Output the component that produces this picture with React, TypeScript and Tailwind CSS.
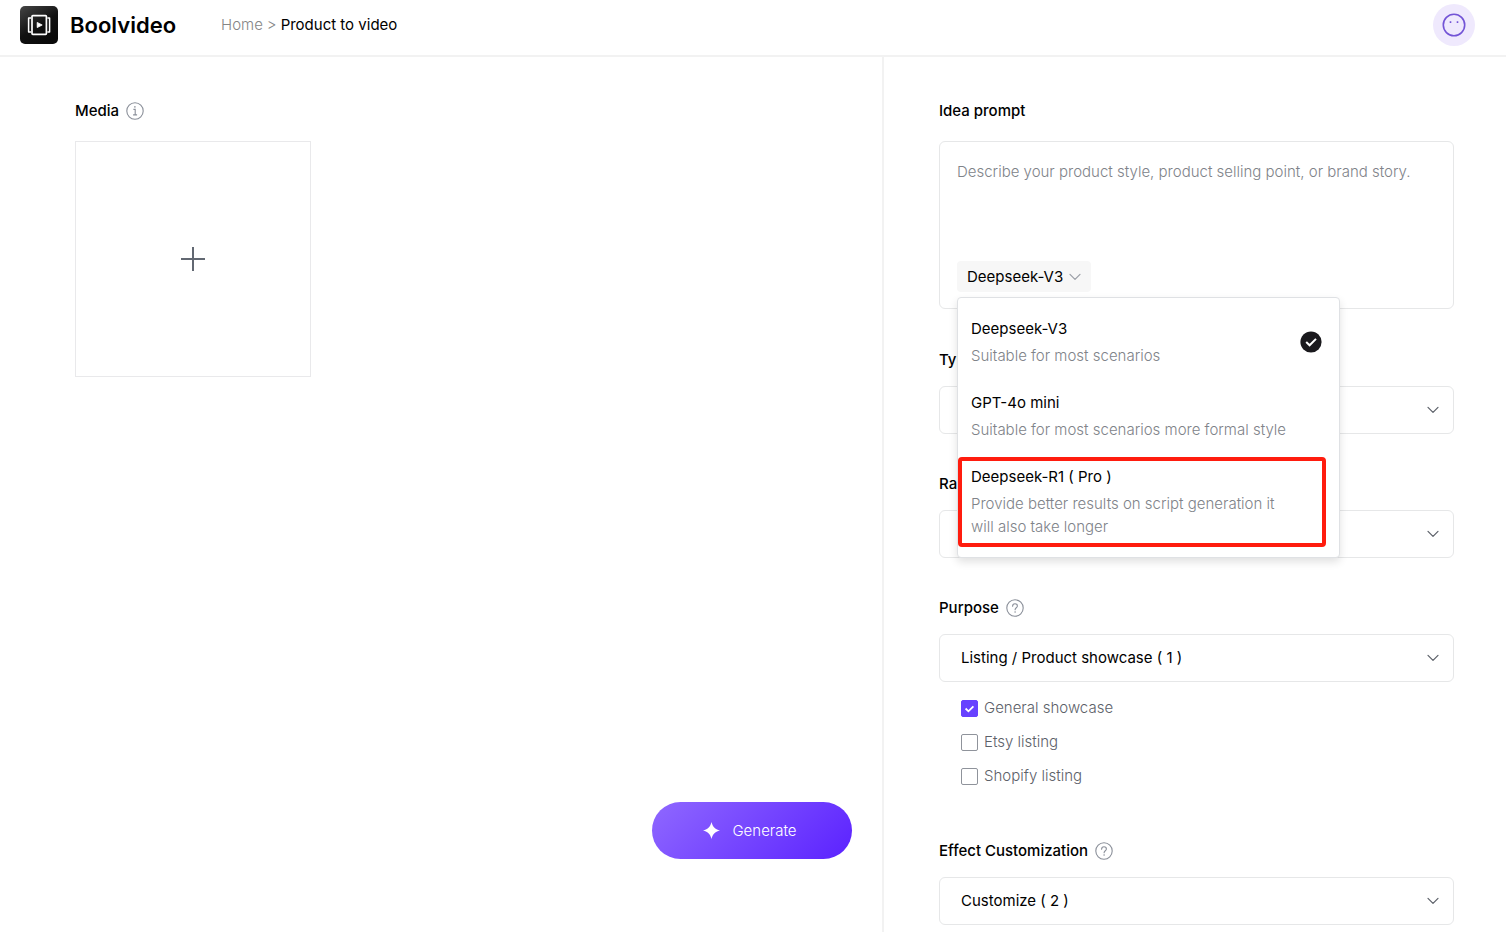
import { ReactNode, useState } from 'react';
import clsx from 'clsx';

interface IModel {
  id: string;
  name: string;
  description: string;
  highlighted?: boolean;
}

interface SelectFieldProps {
  id: string;
  label: string;
  options: string[];
  hint?: boolean;
  children?: ReactNode;
}

const models: IModel[] = [
  {
    id: 'deepseek-v3',
    name: 'Deepseek-V3',
    description: 'Suitable for most scenarios',
  },
  {
    id: 'gpt-4o-mini',
    name: 'GPT-4o mini',
    description: 'Suitable for most scenarios more formal style',
  },
  {
    id: 'deepseek-r1',
    name: 'Deepseek-R1 ( Pro )',
    description:
      'Provide better results on script generation it will also take longer',
    highlighted: true,
  },
];

const purposes = ['General showcase', 'Etsy listing', 'Shopify listing'];

const LogoIcon = () => (
  <svg width="38" height="38" viewBox="0 0 38 38" fill="none">
    <defs>
      <linearGradient id="logo" x1="0" y1="0" x2="24" y2="38" gradientUnits="userSpaceOnUse">
        <stop stopColor="#454545" />
        <stop offset="0.6" stopColor="#111111" />
        <stop offset="1" stopColor="#0a0a0a" />
      </linearGradient>
    </defs>
    <rect width="38" height="38" rx="5" fill="url(#logo)" />
    <rect x="12" y="9.7" width="14.4" height="18.6" rx="0.8" stroke="#fff" strokeWidth="1.7" />
    <path
      d="M11 12H8.6v14H11M27.400 12h2.2v14h-2.200"
      stroke="#fff"
      strokeWidth="1.5"
      strokeLinejoin="round"
    />
    <path d="M17.2 16.4v5.2l5-2.6z" fill="#fff" stroke="#fff" strokeWidth="0.8" strokeLinejoin="round" />
  </svg>
);

const FaceIcon = () => (
  <svg width="24" height="24" viewBox="0 0 24 24" fill="none">
    <circle cx="12" cy="12" r="10.7" stroke="#7354d6" strokeWidth="1.6" />
    <path d="M8.5 8.2v1.9M15.5 8.2v1.9" stroke="#7354d6" strokeWidth="1.6" />
  </svg>
);

const InfoIcon = () => (
  <svg width="18" height="18" viewBox="0 0 18 18" fill="none" stroke="#8a8f99">
    <circle cx="9" cy="9" r="8.2" strokeWidth="1.1" />
    <path d="M7.4 7.4h1.8v5.4M7.1 12.9h4" strokeWidth="1.1" />
    <circle cx="8.9" cy="4.9" r="0.8" fill="#8a8f99" stroke="none" />
  </svg>
);

const HelpIcon = () => (
  <svg width="18" height="18" viewBox="0 0 18 18" fill="none" stroke="#8a8f99">
    <circle cx="9" cy="9" r="8.2" strokeWidth="1.1" />
    <path
      d="M6.6 7.2c0-1.5 1-2.4 2.4-2.4s2.4.9 2.4 2.2c0 1.8-2.3 1.8-2.3 3.8"
      strokeWidth="1.1"
      strokeLinecap="round"
    />
    <circle cx="9.1" cy="13" r="0.8" fill="#8a8f99" stroke="none" />
  </svg>
);

const ChevronIcon = ({ className }: { className?: string }) => (
  <svg className={className} width="12" height="8" viewBox="0 0 12 8" fill="none">
    <path d="M1 1.4 6 6.4l5-5" stroke="currentColor" strokeWidth="1.2" strokeLinecap="round" strokeLinejoin="round" />
  </svg>
);

const SelectField = ({ id, label, options, hint, children }: SelectFieldProps) => (
  <div>
    <div className="flex h-[22px] items-center gap-[7px]">
      <label htmlFor={id} className="font-medium">
        {label}
      </label>
      {hint && <HelpIcon />}
    </div>
    <div className="relative mt-[15px]">
      <select
        id={id}
        className="h-12 w-full appearance-none rounded-md border border-[#e6e7e8] bg-white px-[21px] focus:outline-none focus:ring-2 focus:ring-violet-500"
      >
        {options.map(option => (
          <option key={option}>{option}</option>
        ))}
      </select>
      <ChevronIcon className="pointer-events-none absolute top-5 right-[15px] text-[#5b6068]" />
    </div>
    {children}
  </div>
);

const ModelPicker = () => {
  const [isOpen, setIsOpen] = useState(true);
  const [selectedId, setSelectedId] = useState('deepseek-v3');
  const selected = models.find(model => model.id === selectedId);

  return (
    <div className="relative self-start">
      <button
        type="button"
        aria-expanded={isOpen}
        className="flex h-[31px] cursor-pointer items-center gap-[6px] rounded bg-[#f7f7f7] px-[10px]"
        onClick={() => setIsOpen(!isOpen)}
      >
        {selected?.name}
        <ChevronIcon className="text-[#9a9ea6]" />
      </button>

      {isOpen && (
        <div className="absolute top-full left-0 z-20 mt-[5px] flex w-[383px] flex-col gap-[7px] rounded border border-[#dfe1e4] bg-white pt-[11px] pr-[13px] pb-[10px] shadow-[0_4px_8px_rgba(0,0,0,0.12)]">
          {models.map(model => (
            <button
              key={model.id}
              type="button"
              className={clsx(
                'flex cursor-pointer items-center gap-2 rounded border-4 pt-1 pb-[5px] pl-[9px] text-left leading-[23px]',
                model.highlighted ? 'border-[#ff1c0e]' : 'border-transparent'
              )}
              onClick={() => setSelectedId(model.id)}
            >
              <span className="flex-1">
                <span className="block">{model.name}</span>
                <span className="mt-1 block font-light text-[#808389]">
                  {model.description}
                </span>
              </span>
              <span className="w-[22px]">
                {model.id === selectedId && (
                  <svg width="22" height="22" viewBox="0 0 22 22" fill="none">
                    <circle cx="11" cy="11" r="10.6" fill="#1a191d" />
                    <path d="m6.2 11 3.4 3.3 6.4-6.4" stroke="#fff" strokeWidth="2" />
                  </svg>
                )}
              </span>
            </button>
          ))}
        </div>
      )}
    </div>
  );
};

const Header = () => (
  <header className="flex h-[57px] items-center border-b-2 border-[#f2f2f2] pr-[31px] pb-[5px] pl-5">
    <a href="#" className="flex items-center gap-3">
      <LogoIcon />
      <span className="text-[22px] font-semibold">Boolvideo</span>
    </a>
    <nav className="ml-[45px] flex gap-1 text-[#858585]">
      <a href="#" className="font-light">
        Home
      </a>
      <span className="font-light">&gt;</span>
      <span className="text-black">Product to video</span>
    </nav>
    <button
      type="button"
      aria-label="Account"
      className="ml-auto flex size-[42px] cursor-pointer items-center justify-center rounded-full bg-[#efe9fd]"
    >
      <FaceIcon />
    </button>
  </header>
);

const App = () => {
  const [checked, setChecked] = useState<string[]>(['General showcase']);

  const togglePurpose = (purpose: string) => {
    setChecked(
      checked.includes(purpose)
        ? checked.filter(item => item !== purpose)
        : [...checked, purpose]
    );
  };

  return (
    <div className="flex min-h-screen flex-col bg-white font-['Inter',sans-serif] text-[15px] leading-[22px] text-black">
      <Header />
      <main className="flex flex-1">
        <section className="flex flex-1 flex-col justify-between pt-[43px] pr-[30px] pb-[73px] pl-[75px]">
          <div>
            <h2 className="flex items-center gap-[7px] font-medium">
              Media
              <InfoIcon />
            </h2>
            <button
              type="button"
              aria-label="Add media"
              className="mt-[19px] flex size-[236px] cursor-pointer items-center justify-center border border-[#e9e9eb]"
            >
              <svg width="26" height="26" viewBox="0 0 26 26" fill="none">
                <path d="M13 1v24M1 13h24" stroke="#626872" strokeWidth="2" />
              </svg>
            </button>
          </div>
          <button
            type="button"
            className="flex h-[57px] w-[200px] cursor-pointer items-center justify-center gap-3 self-end rounded-full bg-[linear-gradient(135deg,#8f68ff_0%,#5b22ff_100%)] pr-1 font-light text-white"
          >
            <svg width="17" height="17" viewBox="0 0 17 17">
              <path
                d="M8.5 0c1.300 4.900 3.200 7 8.500 8.500-5.300 1.500-7.200 3.600-8.500 8.500C7.200 12.100 5.300 10 0 8.500 5.300 7 7.200 4.900 8.500 0z"
                fill="#fff"
              />
            </svg>
            Generate
          </button>
        </section>

        <section className="w-[624px] border-l-2 border-[#f2f2f2] pt-[43px] pr-[52px] pb-[7px] pl-[55px]">
          <label htmlFor="prompt" className="block font-medium">
            Idea prompt
          </label>
          <div className="mt-[19px] flex h-[168px] flex-col rounded-md border border-[#e6e7e8] pt-[18px] pr-4 pb-4 pl-[17px]">
            <textarea
              id="prompt"
              placeholder="Describe your product style, product selling point, or brand story."
              className="w-full flex-1 resize-none leading-6 placeholder:font-light placeholder:text-[#808389] focus:outline-none"
            />
            <ModelPicker />
          </div>

          <div className="mt-10 flex flex-col gap-[39px]">
            <SelectField id="type" label="Type" options={['Auto']} />
            <SelectField id="ratio" label="Ratio" options={['9:16', '16:9', '1:1']} />
            <SelectField
              id="purpose"
              label="Purpose"
              options={['Listing / Product showcase ( 1 )']}
              hint
            >
              <div className="mt-[17px] mb-4 flex flex-col gap-4 pl-[22px]">
                {purposes.map(purpose => (
                  <label
                    key={purpose}
                    className="flex h-[18px] cursor-pointer items-center gap-[6px] self-start font-light text-[#5c6169]"
                  >
                    <span className="relative size-[17px]">
                      <input
                        type="checkbox"
                        checked={checked.includes(purpose)}
                        onChange={() => togglePurpose(purpose)}
                        className="block size-[17px] appearance-none rounded-xs border border-[#8f939b] bg-white checked:border-[#6741ff] checked:bg-[#6741ff]"
                      />
                      {checked.includes(purpose) && (
                        <svg
                          className="pointer-events-none absolute inset-0"
                          width="17"
                          height="17"
                          viewBox="0 0 17 17"
                          fill="none"
                        >
                          <path d="m4.600 8.500 2.800 2.800 5-5" stroke="#fff" strokeWidth="1.800" />
                        </svg>
                      )}
                    </span>
                    {purpose}
                  </label>
                ))}
              </div>
            </SelectField>
            <SelectField
              id="effect"
              label="Effect Customization"
              options={['Customize ( 2 )']}
              hint
            />
          </div>
        </section>
      </main>
    </div>
  );
};

export default App;
